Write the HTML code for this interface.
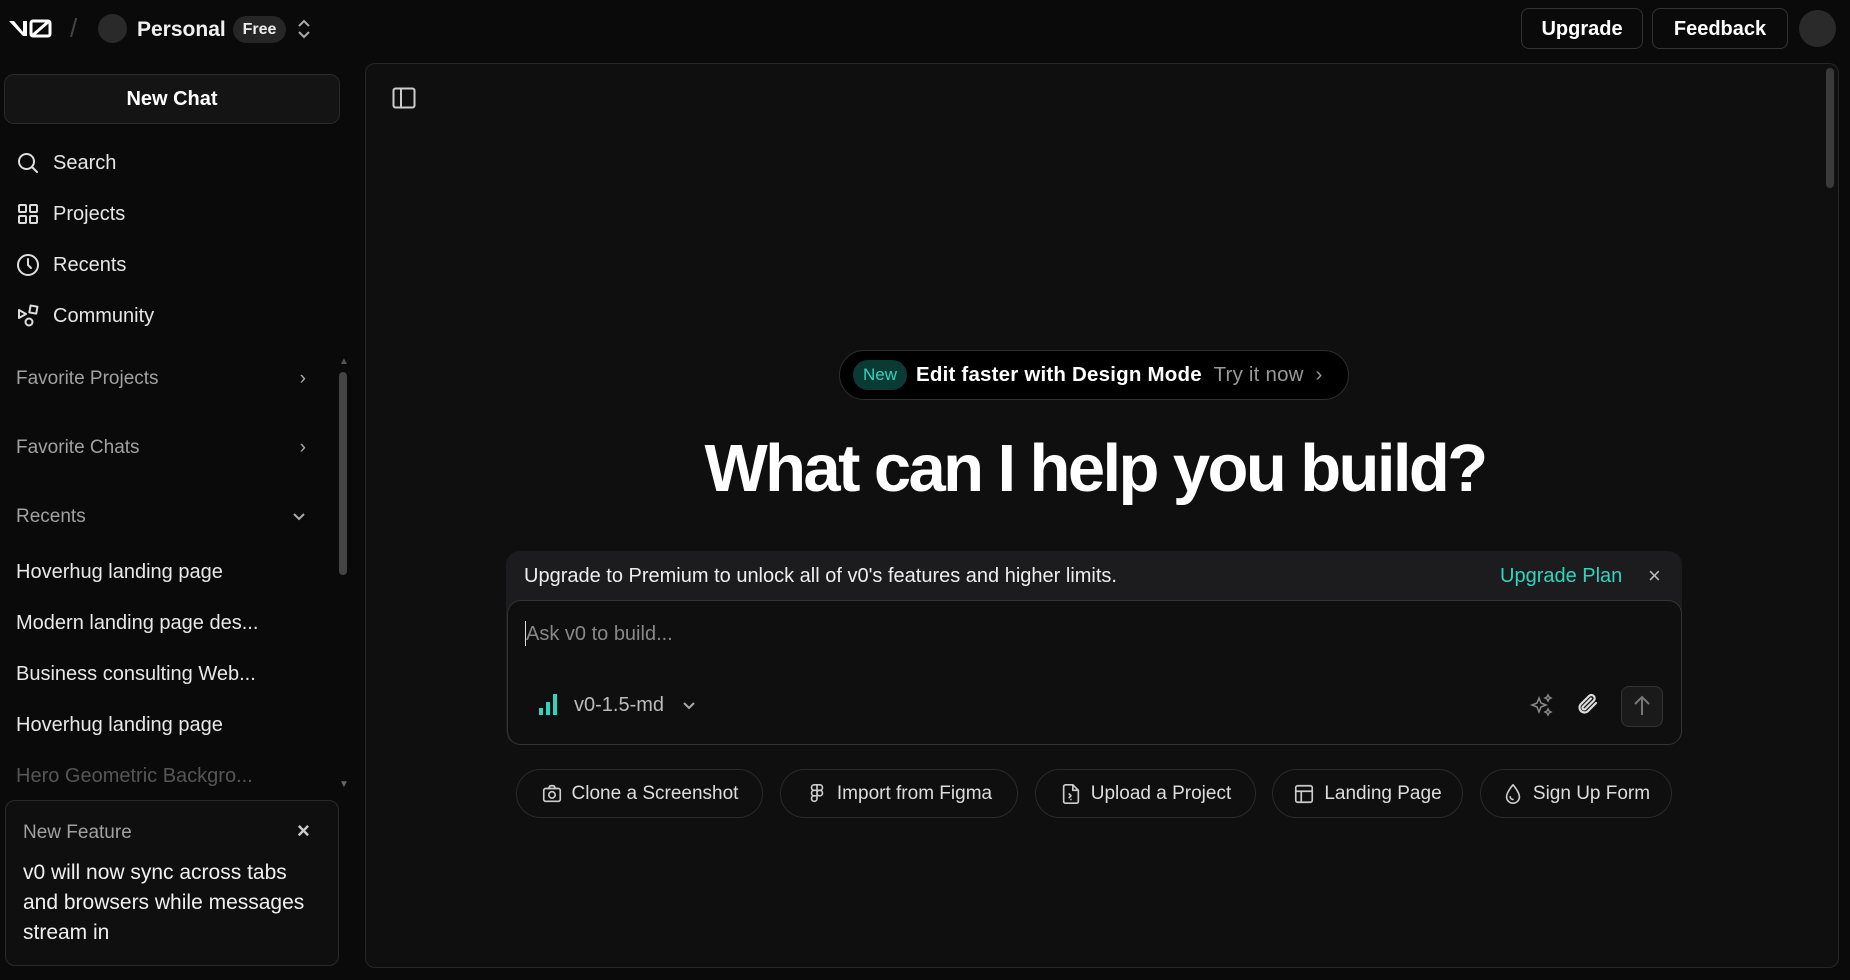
<!DOCTYPE html>
<html><head><meta charset="utf-8"><style>
*{box-sizing:border-box;margin:0;padding:0}
body{width:1850px;height:980px;background:#0a0a0a;color:#ededed;font-family:"Liberation Sans",sans-serif;position:relative;overflow:hidden}
.a{position:absolute}
.nav{position:absolute;left:16px;display:flex;align-items:center;font-size:20px;color:#e6e6e6}
.nav svg{width:24px;height:24px;margin-right:13px;fill:none;stroke:#ddd;stroke-width:2;stroke-linecap:round;stroke-linejoin:round}
.sec{position:absolute;left:16px;width:290px;font-size:19px;color:#a1a1a1;display:flex;justify-content:space-between;align-items:center}
.rec{position:absolute;left:16px;font-size:20px;color:#e8e8e8}
.btn{position:absolute;border:1px solid #333;border-radius:8px;background:#0a0a0a;font-size:20px;font-weight:bold;display:flex;align-items:center;justify-content:center;color:#fff}
.chip{position:absolute;top:769px;height:49px;border:1px solid #2a2a2a;border-radius:25px;background:#0f0f0f;display:flex;align-items:center;justify-content:center;font-size:19px;color:#ddd;gap:9px}
.chip svg{width:22px;height:22px;fill:none;stroke:#ccc;stroke-width:1.8;stroke-linecap:round;stroke-linejoin:round}
</style></head><body>
<!-- header -->
<svg class="a" style="left:9px;top:18px" width="44" height="20" viewBox="0 0 44 20"><path d="M0 3h5l9 11V3h4v15h-4L0 3z" fill="#fff"/><rect x="22" y="3" width="19" height="15" rx="2" fill="none" stroke="#fff" stroke-width="3"/><path d="M24 17L39 4" stroke="#fff" stroke-width="3"/></svg>
<div class="a" style="left:70px;top:13px;color:#444;font-size:26px">/</div>
<div class="a" style="left:98px;top:14px;width:29px;height:29px;border-radius:50%;background:#2a2a2a"></div>
<div class="a" style="left:137px;top:18px;font-size:21px;font-weight:bold;color:#f0f0f0">Personal</div>
<div class="a" style="left:233px;top:16px;width:53px;height:27px;border-radius:14px;background:#262626;font-size:16px;font-weight:bold;text-align:center;line-height:27px">Free</div>
<svg class="a" style="left:294px;top:18px" width="20" height="22" viewBox="0 0 20 22"><path d="M5 8l5-5 5 5M5 14l5 5 5-5" fill="none" stroke="#aaa" stroke-width="2"/></svg>
<div class="btn" style="left:1521px;top:8px;width:122px;height:41px;padding-top:2px">Upgrade</div>
<div class="btn" style="left:1652px;top:8px;width:136px;height:41px;padding-top:2px">Feedback</div>
<div class="a" style="left:1799px;top:10px;width:37px;height:37px;border-radius:50%;background:#2a2a2a"></div>
<!-- sidebar -->
<div class="btn" style="left:4px;top:74px;width:336px;height:50px;background:#141414;border-color:#2a2a2a;border-radius:10px">New Chat</div>
<div class="nav" style="top:151px"><svg viewBox="0 0 24 24"><circle cx="10.5" cy="10.5" r="7.5"/><path d="M16 16l5 5"/></svg>Search</div>
<div class="nav" style="top:202px"><svg viewBox="0 0 24 24"><rect x="3" y="3" width="7" height="7" rx="1"/><rect x="14" y="3" width="7" height="7" rx="1"/><rect x="3" y="14" width="7" height="7" rx="1"/><rect x="14" y="14" width="7" height="7" rx="1"/></svg>Projects</div>
<div class="nav" style="top:253px"><svg viewBox="0 0 24 24"><circle cx="12" cy="12" r="10"/><path d="M12 6v6l3 3"/></svg>Recents</div>
<div class="nav" style="top:304px"><svg viewBox="0 0 24 24"><path d="M3 6l7 4-7 4z"/><rect x="14" y="2" width="7" height="7" transform="rotate(10 17 5)"/><circle cx="13" cy="18" r="3.5"/></svg>Community</div>
<div class="sec" style="top:368px"><span>Favorite Projects</span><span style="color:#aaa">&#8250;</span></div>
<div class="sec" style="top:437px"><span>Favorite Chats</span><span style="color:#aaa">&#8250;</span></div>
<div class="sec" style="top:506px"><span>Recents</span><svg width="14" height="10" viewBox="0 0 14 10"><path d="M2 2l5 5 5-5" fill="none" stroke="#aaa" stroke-width="2"/></svg></div>
<div class="rec" style="top:561px">Hoverhug landing page</div>
<div class="rec" style="top:612px">Modern landing page des...</div>
<div class="rec" style="top:663px">Business consulting Web...</div>
<div class="rec" style="top:714px">Hoverhug landing page</div>
<div class="rec" style="top:765px;color:#555">Hero Geometric Backgro...</div>
<div class="a" style="left:339px;top:372px;width:8px;height:203px;border-radius:4px;background:#444"></div>
<div class="a" style="left:339px;top:356px;color:#555;font-size:10px">&#9650;</div>
<div class="a" style="left:339px;top:779px;color:#666;font-size:10px">&#9660;</div>
<div class="a" style="left:5px;top:800px;width:334px;height:166px;border:1px solid #2a2a2a;border-radius:10px;background:#0f0f0f"></div>
<div class="a" style="left:23px;top:822px;font-size:19px;color:#a1a1a1">New Feature</div>
<div class="a" style="left:297px;top:818px;font-size:22px;color:#ccc;font-weight:bold">&#215;</div>
<div class="a" style="left:23px;top:858px;width:292px;font-size:21px;line-height:30px;color:#f0f0f0">v0 will now sync across tabs and browsers while messages stream in</div>
<!-- main -->
<div class="a" style="left:365px;top:63px;width:1474px;height:905px;border:1px solid #262626;border-radius:10px;background:#0f0f0f"></div>
<div class="a" style="left:1826px;top:68px;width:8px;height:120px;border-radius:4px;background:#3a3a3a"></div>
<svg class="a" style="left:392px;top:87px" width="24" height="22" viewBox="0 0 24 22"><rect x="1.5" y="1.5" width="21" height="19" rx="2" fill="none" stroke="#ccc" stroke-width="2"/><path d="M9 2v18" stroke="#ccc" stroke-width="2"/></svg>
<div class="a" style="left:839px;top:350px;width:510px;height:50px;border:1px solid #2e2e2e;border-radius:25px;background:#000"></div>
<div class="a" style="left:853px;top:360px;width:54px;height:30px;border-radius:15px;background:#0b3a35;color:#2fd5c0;font-size:17px;text-align:center;line-height:30px">New</div>
<div class="a" style="left:916px;top:363px;font-size:20.5px;font-weight:bold;color:#fff;letter-spacing:0.2px">Edit faster with Design Mode <span style="font-weight:normal;color:#999">&nbsp;Try it now &nbsp;&#8250;</span></div>
<div class="a" style="left:500px;top:430px;width:1190px;text-align:center;font-size:67px;font-weight:bold;letter-spacing:-2.6px;color:#fff">What can I help you build?</div>
<div class="a" style="left:506px;top:551px;width:1176px;height:194px;border-radius:14px;background:#1c1c1e"></div>
<div class="a" style="left:524px;top:565px;font-size:20px;color:#eee">Upgrade to Premium to unlock all of v0's features and higher limits.</div>
<div class="a" style="left:1500px;top:565px;font-size:20px;color:#2fd5c0">Upgrade Plan</div>
<div class="a" style="left:1648px;top:563px;font-size:22px;color:#bbb">&#215;</div>
<div class="a" style="left:507px;top:600px;width:1175px;height:145px;border:1px solid #333;border-radius:14px;background:#0f0f0f"></div>
<div class="a" style="left:525px;top:621px;width:1px;height:25px;background:#ddd"></div>
<div class="a" style="left:526px;top:623px;font-size:20px;color:#888">Ask v0 to build...</div>
<svg class="a" style="left:538px;top:692px" width="22" height="24" viewBox="0 0 22 24"><rect x="1" y="16" width="4" height="7" fill="#2fd5c0"/><rect x="8" y="10" width="4" height="13" fill="#2fd5c0"/><rect x="15" y="2" width="4" height="21" fill="#2fd5c0"/></svg>
<div class="a" style="left:574px;top:694px;font-size:20px;color:#bbb">v0-1.5-md</div>
<svg class="a" style="left:682px;top:701px" width="14" height="10" viewBox="0 0 14 10"><path d="M2 2l5 5 5-5" fill="none" stroke="#aaa" stroke-width="2"/></svg>
<svg class="a" style="left:1530px;top:693px" width="24" height="24" viewBox="0 0 24 24"><path d="M9 5l2 5 5 2-5 2-2 5-2-5-5-2 5-2z M18 2l1 2 2 1-2 1-1 2-1-2-2-1 2-1z M18 16l1 2 2 1-2 1-1 2-1-2-2-1 2-1z" fill="none" stroke="#888" stroke-width="1.5"/></svg>
<svg class="a" style="left:1576px;top:692px" width="24" height="26" viewBox="0 0 24 26"><path d="M20 11l-8.5 8.5a5 5 0 01-7-7L13 4a3.3 3.3 0 014.7 4.7L9.3 17a1.7 1.7 0 01-2.4-2.4L15 6.5" fill="none" stroke="#ddd" stroke-width="2.2" stroke-linecap="round"/></svg>
<div class="a" style="left:1621px;top:686px;width:42px;height:41px;border:1px solid #333;border-radius:8px;background:#1a1a1a"></div>
<svg class="a" style="left:1631px;top:694px" width="22" height="24" viewBox="0 0 22 24"><path d="M11 21V3M4 10l7-7 7 7" fill="none" stroke="#777" stroke-width="2"/></svg>
<div class="chip" style="left:516px;width:247px"><svg viewBox="0 0 24 24"><rect x="3" y="6" width="18" height="14" rx="2"/><path d="M8 6l2-3h4l2 3"/><circle cx="12" cy="13" r="3.5"/></svg>Clone a Screenshot</div>
<div class="chip" style="left:780px;width:238px"><svg viewBox="0 0 24 24"><path d="M12 2H9a3 3 0 000 6h3zM12 8H9a3 3 0 000 6h3zM12 14H9a3 3 0 103 3zM12 2h3a3 3 0 010 6h-3zM15 8a3 3 0 110 6 3 3 0 010-6z"/></svg>Import from Figma</div>
<div class="chip" style="left:1035px;width:221px"><svg viewBox="0 0 24 24"><path d="M14 2H6a2 2 0 00-2 2v16a2 2 0 002 2h12a2 2 0 002-2V8z"/><path d="M14 2v6h6M10 12l2 2-2 2M12 18h0"/></svg>Upload a Project</div>
<div class="chip" style="left:1272px;width:191px"><svg viewBox="0 0 24 24"><rect x="3" y="3" width="18" height="18" rx="2"/><path d="M3 9h18M9 9v12"/></svg>Landing Page</div>
<div class="chip" style="left:1480px;width:192px"><svg viewBox="0 0 24 24"><path d="M12 2s7 8 7 13a7 7 0 01-14 0c0-5 7-13 7-13z"/><path d="M9 15a3 3 0 003 3"/></svg>Sign Up Form</div>
</body></html>
